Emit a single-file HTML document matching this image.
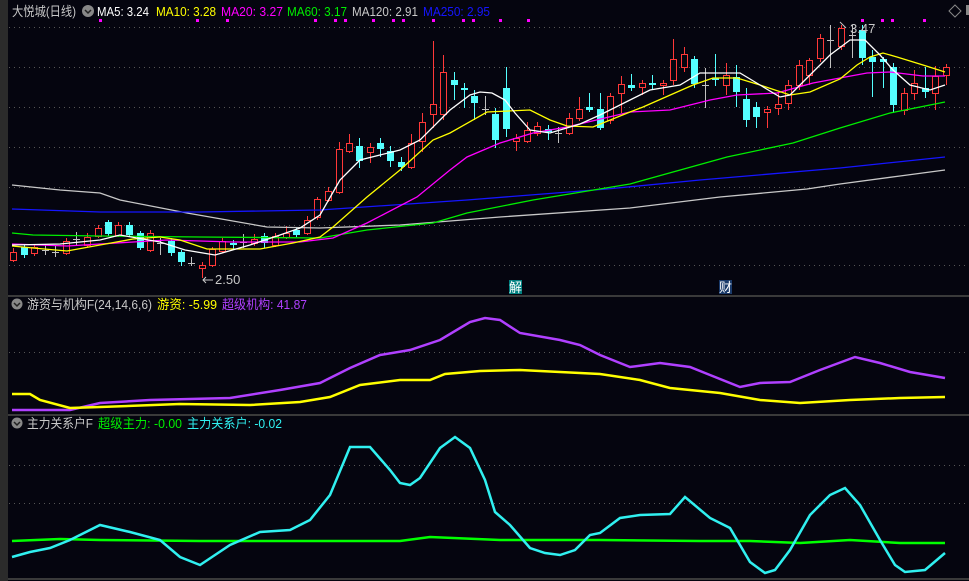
<!DOCTYPE html>
<html><head><meta charset="utf-8"><style>
html,body{margin:0;padding:0;background:#05050f;width:969px;height:581px;overflow:hidden}
svg{display:block}
text{font-family:"Liberation Sans","Noto Sans CJK SC",sans-serif;font-size:13px}
</style></head><body>
<svg id="s" width="969" height="581" xmlns="http://www.w3.org/2000/svg">
<rect width="969" height="581" fill="#05050f"/>
<rect x="0" y="0" width="8" height="581" fill="#2b2b2b"/>
<g stroke="#555" stroke-dasharray="1,4" stroke-width="1">
<line x1="9" y1="27.5" x2="969" y2="27.5"/><line x1="9" y1="67.5" x2="969" y2="67.5"/><line x1="9" y1="107.5" x2="969" y2="107.5"/><line x1="9" y1="147.5" x2="969" y2="147.5"/><line x1="9" y1="187.5" x2="969" y2="187.5"/><line x1="9" y1="225.5" x2="969" y2="225.5"/><line x1="9" y1="265.5" x2="969" y2="265.5"/>
<line x1="9" y1="352.5" x2="969" y2="352.5"/>
<line x1="9" y1="465.5" x2="969" y2="465.5"/><line x1="9" y1="503.5" x2="969" y2="503.5"/>
</g>
<g stroke="#3a3a3a" stroke-width="2"><line x1="8" y1="296" x2="969" y2="296"/><line x1="8" y1="415" x2="969" y2="415"/><line x1="8" y1="579" x2="969" y2="579"/></g>
<g id="c"></g>
<g fill="none" stroke-width="1.3">
<polyline stroke="#c8c8c8" points="12,185 60,190 100,193 120,200 187,213 267,227 320,228 400,225 500,217 630,208 720,197 807,189 840,184 900,176 945,170"/>
<polyline stroke="#1515ff" points="12,209 100,212 200,212 320,210 467,200 607,189 700,180 840,168 945,157"/>
<polyline stroke="#00ee00" points="12,233 33,235 100,236 200,237 320,238 367,230 433,223 467,213 533,200 630,184 727,157 793,143 840,128 890,113 945,102"/>
<polyline stroke="#ff00ff" points="12,244 67,246 100,244 167,240 233,242 300,242 333,238 367,223 417,197 450,170 467,157 500,143 533,133 567,127 630,112 670,110 710,100 737,95 777,93 813,83 840,78 867,73 890,72 923,76 945,76"/>
<polyline stroke="#ffff00" points="12,246 33,248 67,251 100,245 133,239 160,237 180,240 207,249 260,249 293,243 320,237 333,227 367,197 400,170 433,140 450,133 487,112 530,110 550,120 567,126 593,127 630,112 643,107 693,85 713,78 737,78 760,85 790,95 810,92 840,79 857,65 870,57 883,53 897,57 923,65 945,72"/>
<polyline stroke="#ffffff" points="12,245 60,244 100,240 120,235 160,242 185,250 215,255 250,245 280,235 300,228 320,215 340,180 360,160 380,155 400,150 420,140 450,110 470,95 480,92 492,93 505,100 515,113 530,130 550,133 580,124 600,115 630,100 650,90 680,85 700,73 740,73 760,85 780,97 790,95 810,75 830,55 850,40 865,40 880,55 893,70 910,85 930,90 945,85"/>
</g>
<g fill="none" stroke-width="2.5">
<polyline stroke="#b040ff" points="12,410 70,410 100,403 150,400 230,398 280,390 320,383 350,368 380,355 410,350 440,340 470,322 485,318 500,320 520,333 560,340 580,345 600,355 630,367 660,363 690,367 710,375 740,387 760,383 790,382 820,370 855,357 880,363 910,372 945,378"/>
<polyline stroke="#ffff00" points="12,394 30,394 40,400 70,408 100,407 180,404 250,405 300,402 330,397 360,385 400,380 430,380 445,374 480,371 520,370 560,372 600,374 640,380 670,388 720,393 760,400 800,403 850,400 900,398 945,397"/>
<polyline stroke="#00ff00" points="12,541 60,539 100,540 200,541 300,541 400,541 430,537 500,540 600,540 700,541 750,541 800,543 850,540 900,543 945,543"/>
<polyline stroke="#30f0f0" points="12,557 30,552 50,548 70,540 100,525 130,532 160,540 180,557 200,565 230,545 260,532 290,530 310,520 330,495 350,447 370,447 390,470 400,483 410,485 420,478 440,448 455,437 470,448 485,480 495,512 510,525 530,548 545,553 560,555 575,550 590,535 600,533 620,518 640,515 670,514 685,497 710,518 730,528 750,562 765,573 775,570 790,550 810,515 830,495 845,488 860,505 880,540 895,565 905,572 925,570 945,553"/>
</g>
<g id="d" fill="#ff00ff"></g>
<text x="12" y="16" fill="#c8c8c8" textLength="64" lengthAdjust="spacingAndGlyphs">大悦城(日线)</text>
<circle cx="88" cy="11" r="6" fill="#888"/><path d="M85,10 L88,13 L91,10" stroke="#222" stroke-width="1.5" fill="none"/>
<text x="97" y="16" fill="#ffffff" textLength="52" lengthAdjust="spacingAndGlyphs">MA5: 3.24</text>
<text x="156" y="16" fill="#ffff00" textLength="60" lengthAdjust="spacingAndGlyphs">MA10: 3.28</text>
<text x="221" y="16" fill="#ff00ff" textLength="62" lengthAdjust="spacingAndGlyphs">MA20: 3.27</text>
<text x="287" y="16" fill="#00ee00" textLength="60" lengthAdjust="spacingAndGlyphs">MA60: 3.17</text>
<text x="352" y="16" fill="#c8c8c8" textLength="66" lengthAdjust="spacingAndGlyphs">MA120: 2.91</text>
<text x="423" y="16" fill="#1515ff" textLength="67" lengthAdjust="spacingAndGlyphs">MA250: 2.95</text>
<path d="M955,5 L961,11 L955,17 L949,11 Z" stroke="#888" fill="none"/>
<rect x="966" y="5" width="3" height="10" fill="#888"/>
<text x="215" y="284" fill="#c8c8c8" font-size="12">2.50</text>
<path d="M213,280 L203,280 M206,277 L203,280 L206,283" stroke="#c8c8c8" fill="none"/>
<text x="850" y="33" fill="#c8c8c8" font-size="12">3.47</text>
<path d="M846,28 L840,22" stroke="#c8c8c8"/>
<rect x="509" y="280" width="13" height="14" fill="#008080"/><text x="509" y="292" fill="#fff" font-size="12">解</text>
<rect x="719" y="280" width="13" height="14" fill="#1a3a6a"/><text x="719" y="292" fill="#fff" font-size="12">财</text>
<circle cx="17" cy="304" r="5.5" fill="#888"/><path d="M14,303 L17,306 L20,303" stroke="#222" stroke-width="1.5" fill="none"/>
<text x="27" y="309" fill="#c8c8c8" textLength="125" lengthAdjust="spacingAndGlyphs">游资与机构F(24,14,6,6)</text>
<text x="157" y="309" fill="#ffff00" textLength="60" lengthAdjust="spacingAndGlyphs">游资: -5.99</text>
<text x="222" y="309" fill="#b040ff" textLength="85" lengthAdjust="spacingAndGlyphs">超级机构: 41.87</text>
<circle cx="17" cy="423" r="5.5" fill="#888"/><path d="M14,422 L17,425 L20,422" stroke="#222" stroke-width="1.5" fill="none"/>
<text x="27" y="428" fill="#c8c8c8" textLength="66" lengthAdjust="spacingAndGlyphs">主力关系户F</text>
<text x="98" y="428" fill="#00ee00" textLength="84" lengthAdjust="spacingAndGlyphs">超级主力: -0.00</text>
<text x="187" y="428" fill="#30f0f0" textLength="95" lengthAdjust="spacingAndGlyphs">主力关系户: -0.02</text>
</svg>
<script>
var C=[[13,'r',252,260,248,262],[24,'c',247,255,245,258],[34,'r',247,253,245,256],[45,'g',250,250,244,255],[55,'g',252,252,246,257],[66,'r',241,253,238,255],[76,'g',239,239,232,245],[87,'r',237,245,233,247],[98,'r',228,236,225,238],[108,'c',222,234,220,236],[118,'r',225,235,222,237],[129,'c',225,235,222,237],[140,'c',233,248,231,250],[150,'r',233,250,230,252],[160,'g',243,243,238,255],[171,'c',241,253,238,256],[181,'c',252,262,250,266],[191,'g',263,263,257,266],[202,'r',265,268,262,278],[212,'r',249,265,247,267],[222,'r',241,251,238,253],[233,'c',243,245,240,250],[243,'g',242,242,234,248],[254,'r',239,243,234,246],[264,'c',236,243,233,248],[275,'r',236,245,233,247],[286,'r',233,237,226,239],[296,'c',230,235,228,237],[307,'r',220,233,216,235],[317,'r',199,217,197,220],[328,'r',191,200,187,202],[339,'r',149,192,142,194],[349,'r',143,151,134,153],[359,'c',146,161,138,168],[370,'r',147,152,143,163],[380,'c',143,149,138,157],[390,'c',151,161,146,167],[401,'c',162,167,157,171],[411,'r',143,167,134,169],[422,'r',122,141,113,152],[433,'r',104,114,41,128],[443,'r',72,114,55,120],[454,'c',80,85,72,100],[464,'c',88,90,83,108],[474,'c',96,103,90,120],[485,'g',109,109,96,115],[495,'c',114,140,108,148],[506,'c',88,129,67,137],[516,'r',138,141,134,151],[527,'r',130,141,122,143],[537,'r',126,133,122,136],[548,'c',129,132,125,140],[558,'g',133,133,127,143],[569,'r',118,133,113,135],[579,'r',109,118,97,121],[589,'c',107,110,93,112],[600,'c',109,128,93,130],[610,'r',96,120,93,124],[621,'r',84,93,76,113],[631,'c',85,88,74,91],[642,'r',83,87,80,95],[652,'c',83,85,75,90],[663,'r',83,85,80,95],[673,'r',59,80,39,85],[684,'r',54,67,47,72],[694,'c',59,84,56,88],[705,'g',85,85,68,108],[715,'c',78,80,54,86],[726,'r',75,85,63,95],[736,'c',77,92,65,107],[746,'c',99,120,88,127],[756,'c',107,117,102,128],[767,'r',109,112,106,128],[778,'r',104,108,92,115],[788,'r',85,103,80,110],[799,'r',65,85,60,90],[809,'r',60,75,58,85],[820,'r',38,58,34,62],[830,'g',40,40,25,68],[841,'r',28,46,25,50],[852,'g',35,35,25,58],[862,'c',30,58,25,65],[872,'c',57,62,50,97],[883,'c',59,62,57,88],[893,'c',67,105,63,113],[904,'r',93,110,88,115],[914,'r',83,93,70,100],[925,'c',88,92,67,98],[935,'r',76,93,66,110],[946,'r',67,75,64,85]];
var h='',col={r:'#ff3838',c:'#54ffff',g:'#c0c0c0'};
C.forEach(function(a){var x=a[0],k=a[1],c=col[k],t=a[2],b=a[3];
h+='<line x1="'+(x+.5)+'" y1="'+a[4]+'" x2="'+(x+.5)+'" y2="'+a[5]+'" stroke="'+c+'"/>';
if(k=='g'){h+='<line x1="'+(x-3)+'" y1="'+(t+.5)+'" x2="'+(x+4)+'" y2="'+(t+.5)+'" stroke="'+c+'"/>';}
else if(k=='c'){h+='<rect x="'+(x-3)+'" y="'+t+'" width="7" height="'+Math.max(2,b-t)+'" fill="'+c+'"/>';}
else{h+='<rect x="'+(x-2.5)+'" y="'+(t+.5)+'" width="6" height="'+Math.max(1,b-t)+'" fill="#05050f" stroke="'+c+'"/>';}});
document.getElementById('c').innerHTML=h;
var D=[100,197,227,315,335,345,373,393,403,433,463,473,500,528,862,882,892,924],dh='';
D.forEach(function(x){dh+='<rect x="'+(x-1)+'" y="19" width="3" height="3"/>';});
document.getElementById('d').innerHTML=dh;
</script>
</body></html>
